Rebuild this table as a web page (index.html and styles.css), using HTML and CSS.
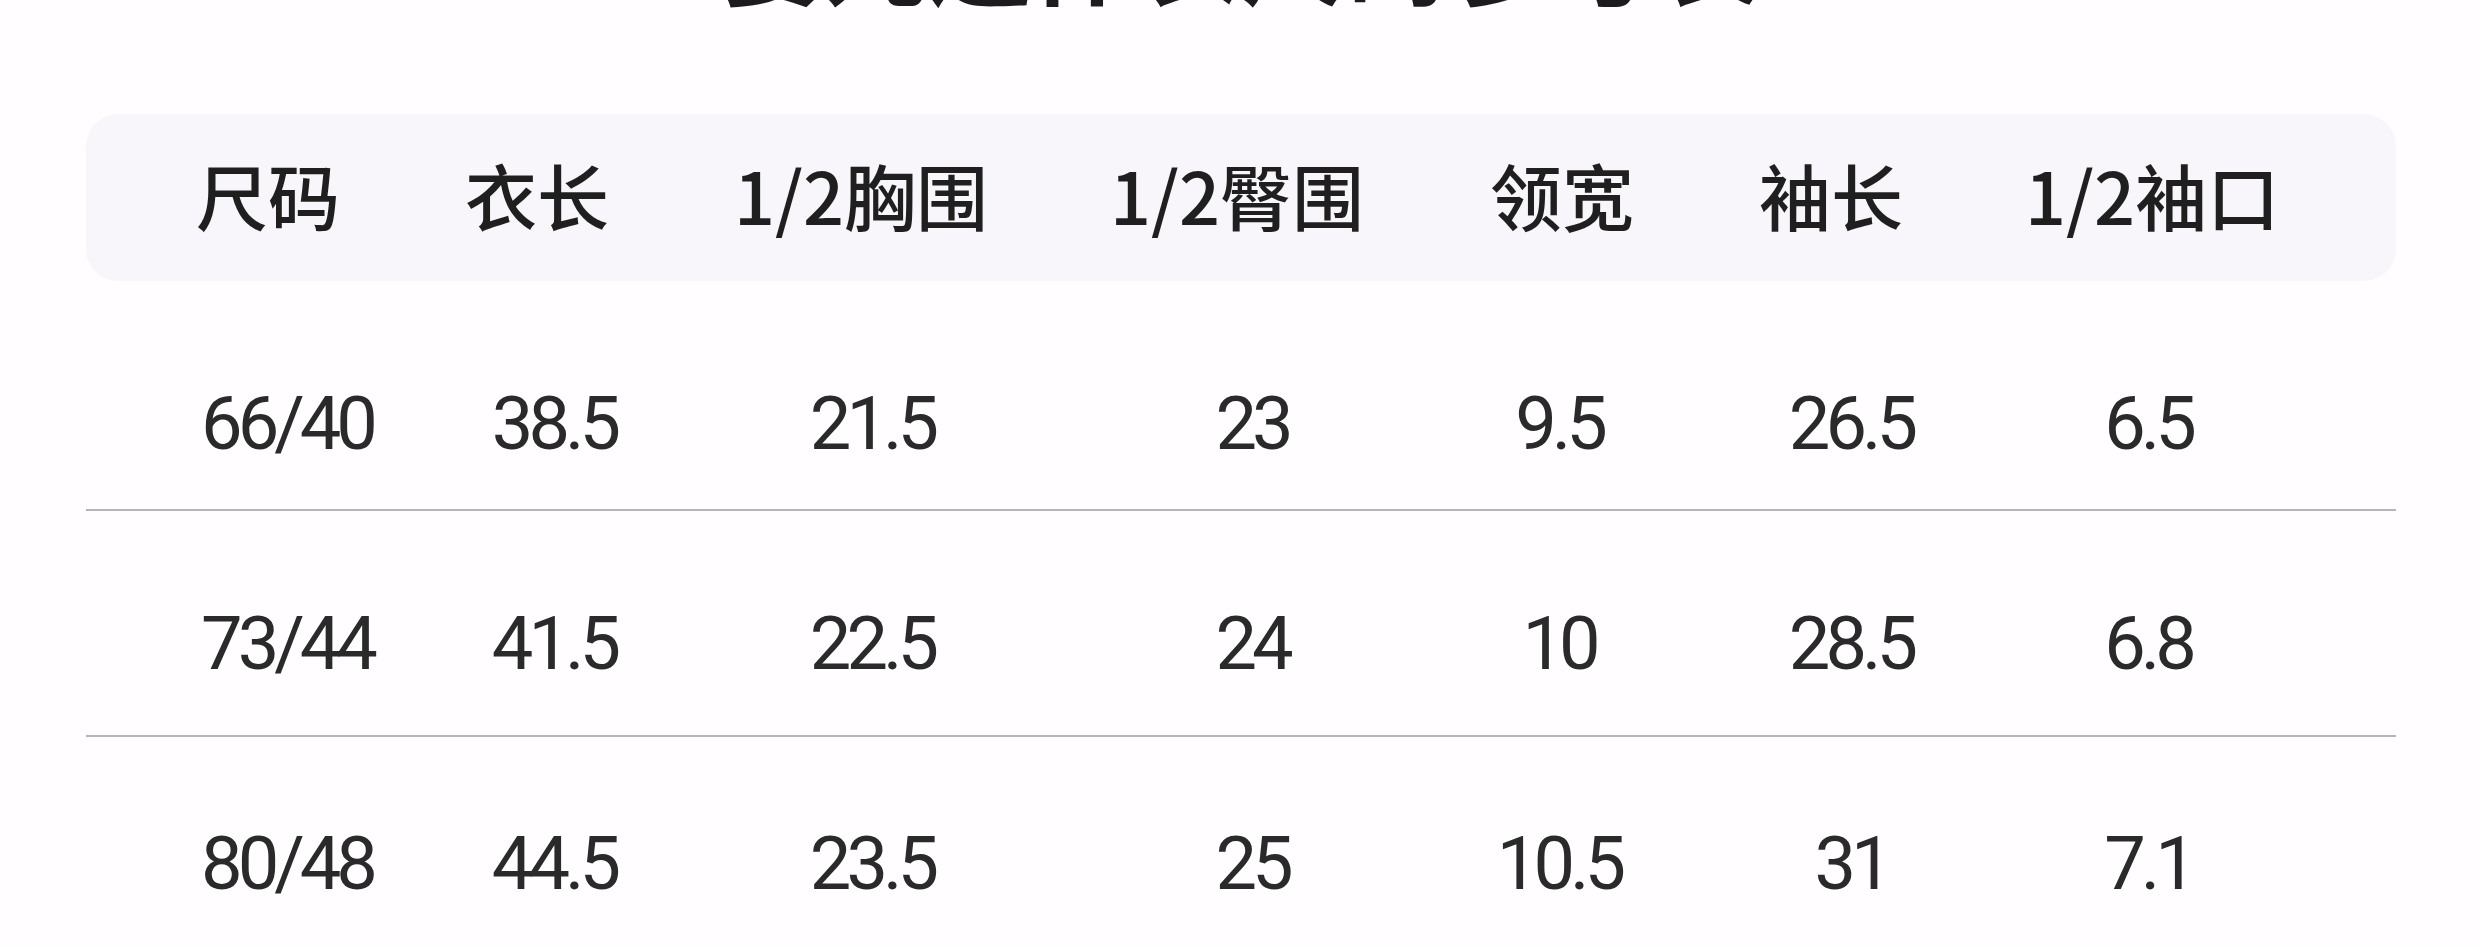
FILE: index.html
```html
<!DOCTYPE html>
<html lang="zh-CN">
<head>
<meta charset="utf-8">
<title>尺码表</title>
<link rel="stylesheet" href="styles.css">
</head>
<body>
<div class="page">
  <h1 class="title">婴儿连体衣尺码参考表</h1>
  <div class="table">
    <div class="head">
      <div class="cell">尺码</div>
      <div class="cell">衣长</div>
      <div class="cell">1/2胸围</div>
      <div class="cell">1/2臀围</div>
      <div class="cell">领宽</div>
      <div class="cell">袖长</div>
      <div class="cell">1/2袖口</div>
    </div>
    <div class="row r1">
      <div class="cell">66/40</div>
      <div class="cell">38.5</div>
      <div class="cell">21.5</div>
      <div class="cell">23</div>
      <div class="cell">9.5</div>
      <div class="cell">26.5</div>
      <div class="cell">6.5</div>
    </div>
    <div class="row r2">
      <div class="cell">73/44</div>
      <div class="cell">41.5</div>
      <div class="cell">22.5</div>
      <div class="cell">24</div>
      <div class="cell">10</div>
      <div class="cell">28.5</div>
      <div class="cell">6.8</div>
    </div>
    <div class="row r3">
      <div class="cell">80/48</div>
      <div class="cell">44.5</div>
      <div class="cell">23.5</div>
      <div class="cell">25</div>
      <div class="cell">10.5</div>
      <div class="cell">31</div>
      <div class="cell">7.1</div>
    </div>
  </div>
</div>
</body>
</html>
```
FILE: styles.css
```css
html, body {
  margin: 0;
  padding: 0;
  background: #fffdff;
  overflow: hidden;
}
.page {
  width: 2480px;
  height: 948px;
  overflow: hidden;
  font-family: "Noto Sans CJK SC", "Noto Sans", sans-serif;
  color: #222222;
}
.title {
  margin: -99px 0 0 0;
  height: 104px;
  font-size: 104px;
  line-height: 104px;
  font-weight: 700;
  text-align: center;
  color: #1c1c1c;
}
.table {
  margin: 109px 0 0 86px;
  width: 2310px;
}
.head {
  display: grid;
  grid-template-columns: 364px 174px 474px 278px 372px 166px 1fr;
  align-items: center;
  height: 167px;
  box-sizing: border-box;
  padding-bottom: 8px;
  background: #f8f6fa;
  border-radius: 32px;
  font-size: 72px;
  font-weight: 500;
  color: #1f1f1f;
}
.head .cell {
  text-align: center;
  white-space: nowrap;
}
.head .cell:last-child {
  text-align: left;
  padding-left: 111px;
}
.row {
  display: grid;
  grid-template-columns: 402px 132px 504px 256px 358px 226px 368px 1fr;
  align-items: start;
  height: 226px;
  box-sizing: border-box;
  border-bottom: 2px solid #b7b4bc;
  font-family: Roboto, "Liberation Sans", sans-serif;
  font-weight: 400;
  font-size: 74px;
  line-height: 86px;
  letter-spacing: -5px;
  color: #2a2a2a;
}
.row.r1 {
  height: 230px;
  padding-top: 100px;
}
.row.r2 {
  padding-top: 90px;
}
.row.r3 {
  padding-top: 84px;
  border-bottom: none;
}
.row .cell {
  text-align: center;
  white-space: nowrap;
}
```
